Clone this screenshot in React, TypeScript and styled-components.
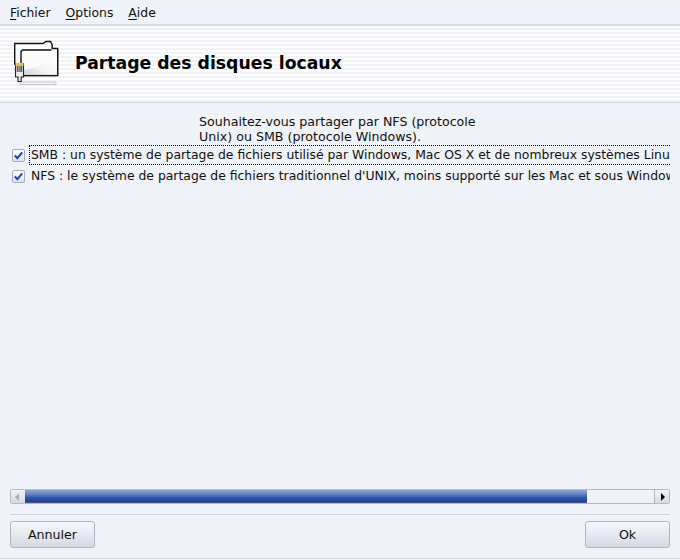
import styled, { createGlobalStyle } from "styled-components";

const GlobalStyle = createGlobalStyle`
  html, body {
    margin: 0;
    padding: 0;
    background: #eff2f7;
  }
`;

const Window = styled.div`
  width: 680px;
  height: 560px;
  display: flex;
  flex-direction: column;
  overflow: hidden;
  background: #eff2f7;
  color: #000;
  font-family: "DejaVu Sans", sans-serif;
  font-size: 12.64px;
`;

const MenuBar = styled.div`
  height: 26px;
  flex: none;
  display: flex;
  align-items: center;
  gap: 15px;
  padding: 1px 10px 0;
  box-sizing: border-box;
  border-bottom: 2px solid #d9dee6;
  font-size: 12.4px;
`;

const MenuItem = styled.span`
  line-height: 20px;
  color: #111;
  u {
    text-underline-offset: 2px;
  }
`;

const Banner = styled.div`
  height: 77px;
  flex: none;
  box-sizing: border-box;
  display: flex;
  align-items: center;
  gap: 15px;
  padding: 0 0 2px 14px;
  border-bottom: 1px solid #cfd3da;
  background: repeating-linear-gradient(to bottom, #ffffff 0, #ffffff 2px, #f1f3f7 2px, #f1f3f7 4px);
`;

const BannerTitle = styled.h1`
  margin: 0;
  font-size: 17.25px;
  font-weight: bold;
  color: #000;
`;

const Body = styled.div`
  flex: 1;
  min-height: 0;
  display: flex;
  flex-direction: column;
  padding: 11px 10px 0;
`;

const Intro = styled.p`
  margin: 0 0 0 189px;
  width: 300px;
  line-height: 15px;
  color: #111;
`;

const OptionList = styled.div`
  flex: 1;
  min-height: 0;
  margin-top: 1px;
  display: flex;
  flex-direction: column;
  gap: 1px;
  overflow: hidden;
`;

const OptionRow = styled.label`
  display: flex;
  align-items: center;
  height: 20px;
  gap: 4px;
  padding-left: 2px;
  white-space: nowrap;
  font-size: 12.4px;
`;

const CheckBox = styled.span`
  flex: none;
  width: 11px;
  height: 11px;
  display: flex;
  align-items: center;
  justify-content: center;
  border: 1px solid #a4abbf;
  border-radius: 2px;
  background: linear-gradient(to bottom, #ffffff, #dde2ee);
`;

const OptionText = styled.span<{ $focused?: boolean }>`
  flex: 1;
  min-width: 0;
  overflow: hidden;
  line-height: 16px;
  padding: 1px 0 1px 1px;
  color: #111;
  border-top: 1px dotted ${({ $focused }) => ($focused ? "#000" : "transparent")};
  border-bottom: 1px dotted ${({ $focused }) => ($focused ? "#000" : "transparent")};
  border-left: 1px dotted ${({ $focused }) => ($focused ? "#000" : "transparent")};
`;

const ScrollBar = styled.div`
  height: 15px;
  flex: none;
  display: flex;
  box-sizing: border-box;
  border: 1px solid #b4b9c4;
  border-radius: 2px;
  background: #f0f2f7;
`;

const ScrollButton = styled.div<{ $disabled?: boolean }>`
  width: 14px;
  flex: none;
  display: flex;
  align-items: center;
  justify-content: center;
  background: linear-gradient(to bottom, #f1f3f7, #d5d9e2);
  &::after {
    content: "";
    border-top: 4px solid transparent;
    border-bottom: 4px solid transparent;
    ${({ $disabled }) =>
      $disabled
        ? "border-right: 4px solid #a8adb8; margin-right: 2px;"
        : "border-left: 4px solid #000; margin-left: 2px;"}
  }
`;

const ScrollTrack = styled.div`
  flex: 1;
  display: flex;
  border-right: 1px solid #b4b9c4;
`;

const ScrollThumb = styled.div`
  height: 100%;
  background: linear-gradient(to bottom, #8fa6cf 0%, #6f8cc2 25%, #2f56a8 60%, #1f3f94 85%, #3a5aa8 100%);
`;

const Divider = styled.div`
  height: 1px;
  flex: none;
  margin-top: 10px;
  background: #ced2da;
`;

const ButtonBar = styled.div`
  flex: none;
  display: flex;
  justify-content: space-between;
  margin-top: 6px;
  padding-bottom: 10px;
`;

const Button = styled.button`
  width: 85px;
  height: 27px;
  padding: 0;
  box-sizing: border-box;
  border: 1px solid #aeb3bf;
  border-radius: 3px;
  background: linear-gradient(to bottom, #f7f8fb, #d5d9e3);
  color: #111;
  font-family: inherit;
  font-size: 12.64px;
`;

const BottomEdge = styled.div`
  height: 1px;
  flex: none;
  margin: 0 -10px 1px;
  background: #d4d7dd;
`;

const FolderIcon = () => (
  <svg width="46" height="46" viewBox="0 0 46 46">
    <defs>
      <linearGradient id="folderFill" x1="0" y1="1" x2="0.8" y2="0.2">
        <stop offset="0" stopColor="#cfcfd2" />
        <stop offset="0.5" stopColor="#f4f4f5" />
        <stop offset="1" stopColor="#ffffff" />
      </linearGradient>
    </defs>
    <path d="M38 9H45V37H10V33H38Z" fill="#bdbdbd" opacity="0.5" />
    <path d="M0.7 24V3.5H29L32 1.5H36.5L38.2 5V8.5H43.7V35.5H7V24Z" fill="#fff" stroke="#111" strokeWidth="1.4" />
    <path d="M7 24V11.5L8.5 10H37.5" fill="none" stroke="#111" strokeWidth="1.4" />
    <path d="M8 34.8V12H43V34.8Z" fill="url(#folderFill)" />
    <path d="M8 30C20 29 30 24 43 17V12H8Z" fill="#fbfbfb" />
    <path d="M6 42H42V44.5H6Z" fill="#f6f6f6" stroke="#c4c6cb" />
    <path d="M1.5 23.5H9.5V37H7.2V41.5H4V37H1.5Z" fill="#ececec" stroke="#222" strokeWidth="1.1" />
    <path d="M1.5 23H9.5V26H1.5Z" fill="#d8c458" />
    <path d="M2.7 26H4.4V32H2.7Z" fill="#d9342c" />
    <path d="M4.6 26H6.3V32H4.6Z" fill="#2ba552" />
    <path d="M6.5 26H8.2V32H6.5Z" fill="#3458bd" />
  </svg>
);

const Check = () => (
  <svg width="9" height="9" viewBox="0 0 9 9">
    <path d="M0.8 4.5L3.4 7.2L8.2 1.3" fill="none" stroke="#1f45a8" strokeWidth="2" />
  </svg>
);

const App = () => {
  return (
    <Window>
      <GlobalStyle />
      <MenuBar>
        <MenuItem><u>F</u>ichier</MenuItem>
        <MenuItem><u>O</u>ptions</MenuItem>
        <MenuItem><u>A</u>ide</MenuItem>
      </MenuBar>
      <Banner>
        <FolderIcon />
        <BannerTitle>Partage des disques locaux</BannerTitle>
      </Banner>
      <Body>
        <Intro>
          Souhaitez-vous partager par NFS (protocole
          <br />
          Unix) ou SMB (protocole Windows).
        </Intro>
        <OptionList>
          <OptionRow>
            <CheckBox><Check /></CheckBox>
            <OptionText $focused>
              SMB : un système de partage de fichiers utilisé par Windows, Mac OS X et de nombreux systèmes Linux récents
            </OptionText>
          </OptionRow>
          <OptionRow>
            <CheckBox><Check /></CheckBox>
            <OptionText>
              NFS : le système de partage de fichiers traditionnel d'UNIX, moins supporté sur les Mac et sous Windows
            </OptionText>
          </OptionRow>
        </OptionList>
        <ScrollBar>
          <ScrollButton $disabled />
          <ScrollTrack>
            <ScrollThumb style={{ width: `${(563 / 630) * 100}%` }} />
          </ScrollTrack>
          <ScrollButton />
        </ScrollBar>
        <Divider />
        <ButtonBar>
          <Button>Annuler</Button>
          <Button>Ok</Button>
        </ButtonBar>
        <BottomEdge />
      </Body>
    </Window>
  );
};

export default App;
